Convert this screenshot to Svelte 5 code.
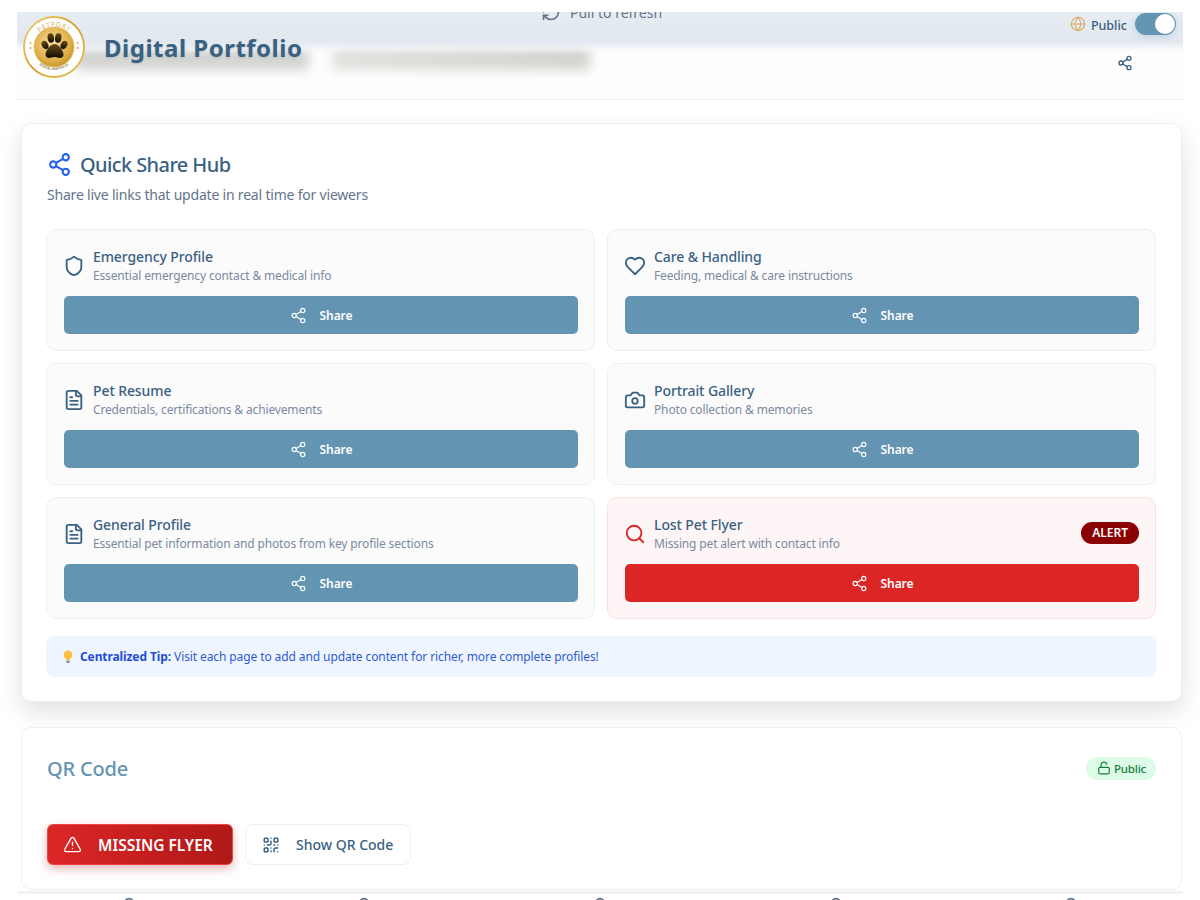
<script lang="ts">
	const icons: Record<string, string[]> = {
		share: [
			'M18 2a3 3 0 1 0 0 6a3 3 0 1 0 0-6',
			'M6 9a3 3 0 1 0 0 6a3 3 0 1 0 0-6',
			'M18 16a3 3 0 1 0 0 6a3 3 0 1 0 0-6',
			'M8.59 13.51l6.83 3.98',
			'M15.41 6.51l-6.82 3.98'
		],
		shield: [
			'M20 13c0 5-3.5 7.5-7.66 8.95a1 1 0 0 1-.67-.01C7.5 20.5 4 18 4 13V6a1 1 0 0 1 1-1c2 0 4.5-1.2 6.24-2.72a1.17 1.17 0 0 1 1.52 0C14.51 3.81 17 5 19 5a1 1 0 0 1 1 1z'
		],
		heart: [
			'M19 14c1.49-1.46 3-3.21 3-5.5A5.5 5.5 0 0 0 16.5 3c-1.76 0-3 .5-4.5 2-1.5-1.5-2.74-2-4.5-2A5.5 5.5 0 0 0 2 8.5c0 2.3 1.5 4.05 3 5.5l7 7Z'
		],
		file: [
			'M15 2H6a2 2 0 0 0-2 2v16a2 2 0 0 0 2 2h12a2 2 0 0 0 2-2V7Z',
			'M14 2v4a2 2 0 0 0 2 2h4',
			'M10 9H8',
			'M16 13H8',
			'M16 17H8'
		],
		camera: [
			'M14.5 4h-5L7 7H4a2 2 0 0 0-2 2v9a2 2 0 0 0 2 2h16a2 2 0 0 0 2-2V9a2 2 0 0 0-2-2h-3l-2.5-3z',
			'M12 10a3 3 0 1 0 0 6a3 3 0 1 0 0-6'
		],
		search: ['M11 3a8 8 0 1 0 0 16a8 8 0 1 0 0-16', 'm21 21-4.3-4.3'],
		globe: [
			'M12 2a10 10 0 1 0 0 20a10 10 0 1 0 0-20',
			'M12 2a14.5 14.5 0 0 0 0 20 14.5 14.5 0 0 0 0-20',
			'M2 12h20'
		],
		alert: [
			'm21.73 18-8-14a2 2 0 0 0-3.48 0l-8 14A2 2 0 0 0 4 21h16a2 2 0 0 0 1.73-3',
			'M12 9v4',
			'M12 17h.01'
		],
		qr: [
			'M4 3h3a1 1 0 0 1 1 1v3a1 1 0 0 1-1 1H4a1 1 0 0 1-1-1V4a1 1 0 0 1 1-1z',
			'M17 3h3a1 1 0 0 1 1 1v3a1 1 0 0 1-1 1h-3a1 1 0 0 1-1-1V4a1 1 0 0 1 1-1z',
			'M4 16h3a1 1 0 0 1 1 1v3a1 1 0 0 1-1 1H4a1 1 0 0 1-1-1v-3a1 1 0 0 1 1-1z',
			'M21 16h-3a2 2 0 0 0-2 2v3',
			'M21 21v.01',
			'M12 7v3a2 2 0 0 1-2 2H7',
			'M3 12h.01',
			'M12 3h.01',
			'M12 16v.01',
			'M16 12h1',
			'M21 12v.01',
			'M12 21v-1'
		],
		unlock: [
			'M5 11h14a2 2 0 0 1 2 2v7a2 2 0 0 1-2 2H5a2 2 0 0 1-2-2v-7a2 2 0 0 1 2-2z',
			'M7 11V7a5 5 0 0 1 9.9-1'
		],
		refresh: [
			'M3 12a9 9 0 0 1 9-9 9.75 9.75 0 0 1 6.74 2.74L21 8',
			'M21 3v5h-5',
			'M21 12a9 9 0 0 1-9 9 9.75 9.75 0 0 1-6.74-2.74L3 16',
			'M8 16H3v5'
		],
		user: ['M12 2a5 5 0 1 0 0 10a5 5 0 1 0 0-10', 'M4 22a8 8 0 0 1 16 0']
	};

	const links = [
		{ icon: 'shield', title: 'Emergency Profile', text: 'Essential emergency contact & medical info' },
		{ icon: 'heart', title: 'Care & Handling', text: 'Feeding, medical & care instructions' },
		{ icon: 'file', title: 'Pet Resume', text: 'Credentials, certifications & achievements' },
		{ icon: 'camera', title: 'Portrait Gallery', text: 'Photo collection & memories' },
		{ icon: 'file', title: 'General Profile', text: 'Essential pet information and photos from key profile sections' },
		{ icon: 'search', title: 'Lost Pet Flyer', text: 'Missing pet alert with contact info', alert: true }
	];
</script>

{#snippet icon(name: string, size: number, stroke = 2)}
	<svg
		class="icon"
		width={size}
		height={size}
		viewBox="0 0 24 24"
		fill="none"
		stroke="currentColor"
		stroke-width={stroke}
		stroke-linecap="round"
		stroke-linejoin="round"
	>
		{#each icons[name] as d}
			<path {d} />
		{/each}
	</svg>
{/snippet}

<div class="page">
	<header class="top">
		<div class="smear one"></div>
		<div class="smear two"></div>
		<div class="band"></div>
		<div class="pull">
			{@render icon('refresh', 20)}
			<span>Pull to refresh</span>
		</div>

		<div class="brand">
			<svg class="logo" width="62" height="62" viewBox="0 0 62 62">
				<defs>
					<linearGradient id="gold" x1="0" y1="0" x2="1" y2="1">
						<stop offset="0" stop-color="#f3d27a" />
						<stop offset="0.5" stop-color="#d49f2c" />
						<stop offset="1" stop-color="#e9bf55" />
					</linearGradient>
					<radialGradient id="coin" cx="0.45" cy="0.4" r="0.7">
						<stop offset="0" stop-color="#f7e2a6" />
						<stop offset="0.65" stop-color="#dfae45" />
						<stop offset="1" stop-color="#b8841f" />
					</radialGradient>
					<linearGradient id="paw" x1="0" y1="0" x2="0" y2="1">
						<stop offset="0" stop-color="#6b4a18" />
						<stop offset="1" stop-color="#120d05" />
					</linearGradient>
					<path id="arcTop" d="M10.5 31a20.5 20.5 0 0 1 41 0" />
					<path id="arcBottom" d="M8 31a23 23 0 0 0 46 0" />
				</defs>
				<circle cx="31" cy="31" r="30" fill="#fff" stroke="url(#gold)" stroke-width="1.8" />
				<circle cx="31" cy="31" r="20" fill="url(#coin)" stroke="#e3bb62" stroke-width="0.8" />
				<text class="arc top-arc"><textPath href="#arcTop" startOffset="50%" text-anchor="middle">PETPORT</textPath></text>
				<text class="arc low-arc"><textPath href="#arcBottom" startOffset="50%" text-anchor="middle">DIGITAL PORTFOLIO</textPath></text>
				<g fill="url(#paw)">
					<ellipse cx="22" cy="29" rx="3.2" ry="4.4" transform="rotate(-25 22 29)" />
					<ellipse cx="27.8" cy="22" rx="3.2" ry="4.8" transform="rotate(-8 27.8 22)" />
					<ellipse cx="35.2" cy="22" rx="3.2" ry="4.8" transform="rotate(8 35.2 22)" />
					<ellipse cx="41" cy="29" rx="3.2" ry="4.4" transform="rotate(25 41 29)" />
					<path d="M31.5 28c3.8 0 9 6.500 9 10.500 0 3.300-3.300 3.800-5 3.300-1.500-.4-2.800-.8-4-.8s-2.500.4-4 .8c-1.700.5-5 0-5-3.300 0-4 5.200-10.500 9-10.500z" />
				</g>
				<g fill="#d9a94a">
					<circle cx="7.500" cy="27" r="1" />
					<circle cx="7.500" cy="32" r="1" />
					<circle cx="54.500" cy="27" r="1" />
					<circle cx="54.500" cy="32" r="1" />
				</g>
			</svg>
			<h1>Digital Portfolio</h1>
		</div>

		<div class="controls">
			<div class="visibility">
				<span class="globe">{@render icon('globe', 16, 1.6)}</span>
				<span>Public</span>
				<span class="toggle"><span class="knob"></span></span>
			</div>
			<span class="head-share">{@render icon('share', 16, 2)}</span>
		</div>
	</header>

	<main>
		<section class="card hub">
			<h2>
				<span class="hub-icon">{@render icon('share', 25, 2)}</span>
				Quick Share Hub
			</h2>
			<p class="lead">Share live links that update in real time for viewers</p>

			<div class="grid">
				{#each links as link}
					<article class="link" class:alert={link.alert}>
						<div class="link-head">
							<span class="link-icon">{@render icon(link.icon, 22, 2)}</span>
							<div class="link-text">
								<h3>{link.title}</h3>
								<p>{link.text}</p>
							</div>
							{#if link.alert}
								<span class="badge">ALERT</span>
							{/if}
						</div>
						<button class="share">
							{@render icon('share', 17, 1.6)}
							<span>Share</span>
						</button>
					</article>
				{/each}
			</div>

			<div class="tip">
				<svg class="bulb" width="12" height="14" viewBox="0 0 12 14">
					<path d="M6 .5a4.300 4.300 0 0 0-2.600 7.700c.6.500.8 1 .9 1.800h3.400c.1-.8.300-1.300.9-1.800A4.300 4.300 0 0 0 6 .5z" fill="#fbbf3c" />
					<rect x="4.300" y="10.400" width="3.400" height="2.600" rx="0.800" fill="#8b8fa3" />
				</svg>
				<p><strong>Centralized Tip:</strong> Visit each page to add and update content for richer, more complete profiles!</p>
			</div>
		</section>

		<section class="card qr">
			<div class="qr-head">
				<h2>QR Code</h2>
				<span class="pill">{@render icon('unlock', 14, 2)}Public</span>
			</div>
			<div class="actions">
				<button class="flyer">{@render icon('alert', 19, 1.7)}<span>MISSING FLYER</span></button>
				<button class="show">{@render icon('qr', 18, 2)}<span>Show QR Code</span></button>
			</div>
		</section>
	</main>

	<nav class="bottom">
		<div class="tabs">
			{#each [0, 1, 2, 3, 4] as item}
				<span class="tab" data-item={item}>{@render icon('user', 20, 2)}</span>
			{/each}
		</div>
	</nav>
</div>

<style>
	:global(body) {
		background: #fff;
		overflow: hidden;
	}

	.page {
		height: 900px;
		overflow: hidden;
		padding: 12px 17px 0;
		box-sizing: border-box;
		font-family: 'Noto Sans', 'Open Sans', sans-serif;
		color: #3a6182;
	}

	h1,
	h2,
	h3,
	p {
		margin: 0;
	}

	.icon {
		display: block;
		flex: none;
	}

	/* header */
	.top {
		position: relative;
		display: flex;
		justify-content: space-between;
		height: 88px;
		box-sizing: border-box;
		overflow: hidden;
		border-bottom: 1px solid #e8eef7;
		background: #fefefe;
	}

	.band {
		position: absolute;
		inset: 0 0 auto 0;
		height: 42px;
		background: linear-gradient(#e6ecf2, #e1e8ef 70%, rgba(240, 244, 247, 0.5) 88%, rgba(255, 255, 255, 0));
	}

	.smear {
		position: absolute;
		top: 36px;
		height: 22px;
		filter: blur(6px);
	}

	.smear.one {
		left: 58px;
		width: 234px;
		background: #d2d3cf;
	}

	.smear.two {
		left: 315px;
		width: 258px;
		background: linear-gradient(90deg, #e0e0dd, #d0d2cc);
	}

	.pull {
		position: absolute;
		left: 524px;
		top: -10px;
		display: flex;
		align-items: center;
		gap: 9px;
		font-size: 14px;
		color: #64748b;
	}

	.brand {
		position: relative;
		display: flex;
		align-items: center;
		gap: 19px;
		height: 62px;
		margin: 4px 0 0 6px;
	}

	.logo {
		display: block;
	}

	.arc {
		font-family: 'Noto Sans', sans-serif;
		fill: #d6ab58;
	}

	.top-arc {
		font-size: 6.500px;
		letter-spacing: 0.6px;
	}

	.low-arc {
		font-size: 3.200px;
		font-weight: 700;
		fill: #8c7a50;
	}

	h1 {
		font-size: 24px;
		font-weight: 700;
		letter-spacing: 0.5px;
		text-shadow: 0 1px 2px rgba(58, 97, 130, 0.2);
	}

	.controls {
		position: relative;
		display: flex;
		flex-direction: column;
		align-items: flex-end;
		gap: 20px;
		margin: 1px 7px 0 0;
	}

	.visibility {
		display: flex;
		align-items: center;
		gap: 5px;
		font-size: 12.500px;
		font-weight: 500;
	}

	.visibility > span:nth-child(2) {
		padding-top: 2px;
	}

	.globe {
		color: #d9a95f;
	}

	.toggle {
		display: block;
		width: 41px;
		height: 22px;
		margin-left: 3px;
		padding: 1px;
		box-sizing: border-box;
		border-radius: 11px;
		background: #6394b2;
		box-shadow: 0 2px 6px rgba(99, 148, 178, 0.25);
	}

	.knob {
		display: block;
		width: 20px;
		height: 20px;
		margin-left: 19px;
		border-radius: 50%;
		background: #fff;
	}

	.head-share {
		margin-right: 43px;
	}

	/* cards */
	main {
		padding: 23px 1px 0 4px;
	}

	.card {
		background: #fff;
		border: 1px solid #eceef2;
		border-radius: 10px;
		box-sizing: border-box;
	}

	.hub {
		height: 579px;
		padding: 25px 25px 0 24px;
		box-shadow: 0 10px 25px rgba(0, 0, 0, 0.12);
	}

	.hub h2 {
		display: flex;
		align-items: center;
		gap: 8px;
		height: 30px;
		margin-left: 1px;
		font-size: 20px;
		font-weight: 500;
		letter-spacing: -0.6px;
	}

	.hub-icon {
		color: #2563eb;
	}

	.lead {
		margin: 6px 0 0 1px;
		font-size: 14px;
		line-height: 20px;
		letter-spacing: -0.2px;
		color: #64748b;
	}

	.grid {
		display: grid;
		grid-template-columns: 1fr 1fr;
		gap: 12px;
		margin-top: 24px;
	}

	.link {
		height: 122px;
		padding: 17px 16px 17px 17px;
		box-sizing: border-box;
		background: #fbfbfc;
		border: 1px solid #eeeff2;
		border-radius: 10px;
	}

	.link.alert {
		background: #fef6f6;
		border-color: #fde0e0;
	}

	.link-head {
		display: flex;
		align-items: center;
		height: 37px;
		margin-bottom: 12px;
	}

	.link-icon {
		width: 30px;
		margin-left: -1px;
		flex: none;
	}

	.alert .link-icon {
		color: #dc2626;
	}

	.link-text {
		flex: 1;
	}

	h3 {
		font-size: 14px;
		font-weight: 500;
		line-height: 20px;
		letter-spacing: -0.1px;
	}

	.link-text p {
		font-size: 12px;
		line-height: 17px;
		letter-spacing: -0.15px;
		color: #7b8aa0;
	}

	.badge {
		margin-top: -2px;
		padding: 0 11px;
		font-size: 12px;
		font-weight: 600;
		line-height: 22px;
		color: #fff;
		background: #8b0000;
		border-radius: 11px;
	}

	button {
		font-family: inherit;
		cursor: pointer;
	}

	.share {
		display: flex;
		align-items: center;
		justify-content: center;
		gap: 13px;
		width: 100%;
		height: 38px;
		padding: 0;
		color: #fff;
		font-size: 12px;
		font-weight: 600;
		letter-spacing: -0.1px;
		background: #6394b2;
		border: 0;
		border-radius: 5px;
	}

	.alert .share {
		background: #dc2626;
	}

	.tip {
		display: flex;
		align-items: center;
		gap: 6px;
		height: 41px;
		margin-top: 17px;
		padding-left: 16px;
		background: #eff5ff;
		border-radius: 8px;
		font-size: 12px;
		letter-spacing: -0.1px;
		color: #2f5bd6;
	}

	.tip strong {
		color: #1d4ed8;
		font-weight: 700;
	}

	/* qr */
	.qr {
		height: 163px;
		margin-top: 25px;
		padding: 24px 25px 0;
	}

	.qr-head {
		display: flex;
		align-items: center;
		justify-content: space-between;
		height: 32px;
	}

	.qr-head h2 {
		font-size: 20px;
		font-weight: 500;
		letter-spacing: -0.2px;
		color: #6394b2;
	}

	.pill {
		display: flex;
		align-items: center;
		gap: 3px;
		height: 23px;
		padding: 0 10px 0 11px;
		font-size: 11.500px;
		font-weight: 500;
		letter-spacing: -0.2px;
		color: #15803d;
		background: #dcfce7;
		border-radius: 12px;
	}

	.actions {
		display: flex;
		gap: 12px;
		margin-top: 40px;
	}

	.flyer {
		display: flex;
		align-items: center;
		gap: 16px;
		width: 186px;
		height: 41px;
		padding: 0 0 0 15px;
		color: #fff;
		font-size: 15.500px;
		font-weight: 600;
		background: linear-gradient(90deg, #dc2626, #b01818);
		border: 1px solid #ef4444;
		border-radius: 6px;
		box-shadow: 0 4px 10px rgba(176, 24, 24, 0.3);
	}

	.show {
		display: flex;
		align-items: center;
		gap: 16px;
		width: 166px;
		height: 41px;
		padding: 0 0 0 16px;
		color: #3a6182;
		font-size: 14px;
		font-weight: 500;
		background: #fff;
		border: 1px solid #eef0f4;
		border-radius: 8px;
	}

	/* bottom nav, cut off by the window */
	.bottom {
		margin-top: 1px;
		padding-top: 3px;
		border-top: 3px solid #f0f2f6;
		color: #64748b;
	}

	.tabs {
		display: grid;
		grid-template-columns: repeat(5, 1fr);
		justify-items: center;
		margin: 0 -6px;
	}
</style>
